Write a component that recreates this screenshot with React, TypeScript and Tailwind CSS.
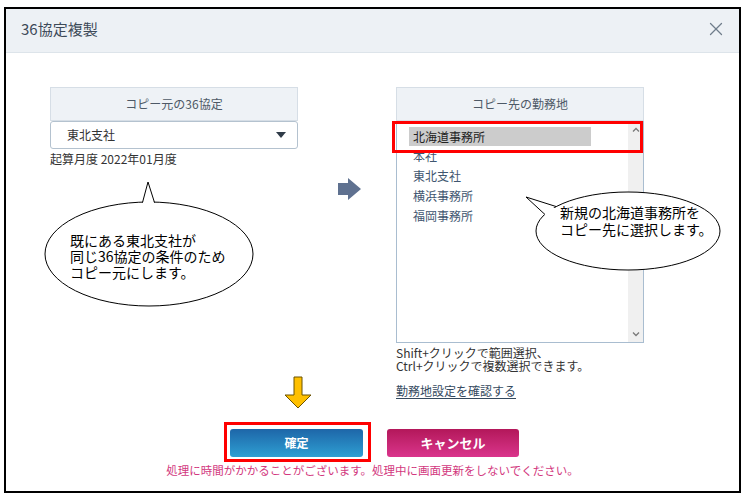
import { X } from 'lucide-react';

const font = { fontFamily: '"Noto Sans CJK JP", "Noto Sans", sans-serif' };

function Chevron({ up }: { up?: boolean }) {
  return (
    <svg width="8" height="5" viewBox="0 0 8 5">
      <polyline
        points={up ? '1,4.5 4,1.5 7,4.5' : '1,0.5 4,3.5 7,0.5'}
        fill="none"
        stroke="#7a7a7a"
        strokeWidth="1.3"
      />
    </svg>
  );
}

export default function App() {
  const offices = ['本社', '東北支社', '横浜事務所', '福岡事務所'];

  return (
    <div className="relative w-[748px] h-[502px] bg-white pt-[7px] pl-[4px] text-[#333]" style={font}>
      <div className="w-[737px] h-[486px] border-2 border-black flex flex-col">
        {/* header */}
        <div className="h-[44px] shrink-0 bg-[#edf1f5] border-b border-[#dde4ea] flex items-center justify-between pl-[15px] pr-[12px]">
          <span className="text-[15px] leading-[20px] text-[#3d4a58] -mt-[3px]">36協定複製</span>
          <X size={22} strokeWidth={1.4} className="text-[#6f7d8b] -mt-[3px]" />
        </div>

        <div className="flex flex-col">
          <div className="flex items-start pt-[34px] pl-[44px]">
            {/* source */}
            <div className="w-[248px]">
              <div className="h-[34px] bg-[#eef2f6] border border-[#d6dee6] text-center text-[12px] leading-[32px] text-[#4d5966]">
                コピー元の36協定
              </div>
              <div className="h-[28px] bg-white border border-[#b4c2cf] rounded-[3px] flex items-center justify-between pl-[16px] pr-[11px]">
                <span className="text-[12px] leading-[14px] text-[#333]">東北支社</span>
                <svg width="10" height="6" viewBox="0 0 10 6">
                  <polygon points="0,0 10,0 5,6" fill="#2f3b48" />
                </svg>
              </div>
              <div className="mt-[3px] text-[12px] leading-[14px] text-[#333]">起算月度 2022年01月度</div>
            </div>

            {/* arrow */}
            <div className="w-[98px] flex justify-center pt-[91px] pl-[4px]">
              <svg width="23" height="22" viewBox="0 0 23 22">
                <polygon points="0,5 10,5 10,0 23,11 10,22 10,17 0,17" fill="#5f7190" />
              </svg>
            </div>

            {/* destination */}
            <div className="relative w-[248px]">
              <div className="h-[34px] bg-[#eef2f6] border border-[#d6dee6] text-center text-[12px] leading-[32px] text-[#4d5966]">
                コピー先の勤務地
              </div>
              <div className="h-[222px] bg-white border border-[#a9bdd0] flex">
                <div className="flex-1 pt-[5px] pl-[12px]">
                  <div className="w-[182px] h-[19px] bg-[#cccccc] pl-[4px] text-[12px] leading-[19px] text-[#222]">北海道事務所</div>
                  {offices.map((o) => (
                    <div key={o} className="h-[20px] pl-[4px] text-[12px] leading-[20px] text-[#3f5670]">
                      {o}
                    </div>
                  ))}
                </div>
                <div className="w-[15px] bg-[#f0f0f0] flex flex-col items-center justify-between py-[5px]">
                  <Chevron up />
                  <Chevron />
                </div>
              </div>
              <div className="mt-[3px] text-[12px] leading-[14px] text-[#333]">
                <div>Shift+クリックで範囲選択、</div>
                <div className="-mt-[1px]">Ctrl+クリックで複数選択できます。</div>
              </div>
              <div className="mt-[11px] text-[12px] leading-[14px] text-[#34495e] underline underline-offset-2">
                勤務地設定を確認する
              </div>
              <div className="absolute left-[-4px] top-[34px] w-[251px] h-[32px] border-[3px] border-[#ff0000]" />
            </div>
          </div>

          {/* buttons */}
          <div className="mt-[31px] flex justify-center gap-[24px] pl-[4px]">
            <div className="relative">
              <button className="w-[133px] h-[28px] rounded-[3px] bg-gradient-to-b from-[#1e66a8] to-[#2f9fd2] text-white text-[12px] font-bold">
                確定
              </button>
              <div className="absolute left-[-6px] top-[-7px] w-[147px] h-[40px] border-[3px] border-[#ff0000]" />
              <svg className="absolute left-[54px] top-[-53px]" width="28" height="33" viewBox="0 0 28 33">
                <polygon
                  points="10,1 18,1 18,19 27,19 14,32 1,19 10,19"
                  fill="#ffc000"
                  stroke="#6b5200"
                  strokeWidth="1"
                />
              </svg>
            </div>
            <button className="w-[132px] h-[28px] rounded-[3px] bg-gradient-to-b from-[#b3175a] to-[#da348c] text-white text-[13px] font-bold">
              キャンセル
            </button>
          </div>
          <div className="mt-[6px] text-center text-[11.5px] leading-[14px] text-[#d2387e]">
            処理に時間がかかることがございます。処理中に画面更新をしないでください。
          </div>
        </div>
      </div>

      {/* callouts */}
      <svg className="absolute left-0 top-0 pointer-events-none" width="748" height="502">
        <ellipse cx="149" cy="254" rx="104" ry="52" fill="white" stroke="#000" strokeWidth="1" />
        <polygon points="142,206 148,182 155,206" fill="white" />
        <polyline points="142.5,202.5 148,182 154.5,202.5" fill="none" stroke="#000" strokeWidth="1" />
        <ellipse cx="628" cy="231" rx="92" ry="39" fill="white" stroke="#000" strokeWidth="1" />
        <polygon points="560,210 526,197 548,218" fill="white" />
        <polyline points="556,206.5 526,197 545,214.5" fill="none" stroke="#000" strokeWidth="1" />
      </svg>
      <div className="absolute left-[70px] top-[232px] text-[14px] leading-[16px] text-black">
        <div>既にある東北支社が</div>
        <div>同じ36協定の条件のため</div>
        <div>コピー元にします。</div>
      </div>
      <div className="absolute left-[560px] top-[204px] text-[14px] leading-[17px] text-black">
        <div>新規の北海道事務所を</div>
        <div>コピー先に選択します。</div>
      </div>
    </div>
  );
}
